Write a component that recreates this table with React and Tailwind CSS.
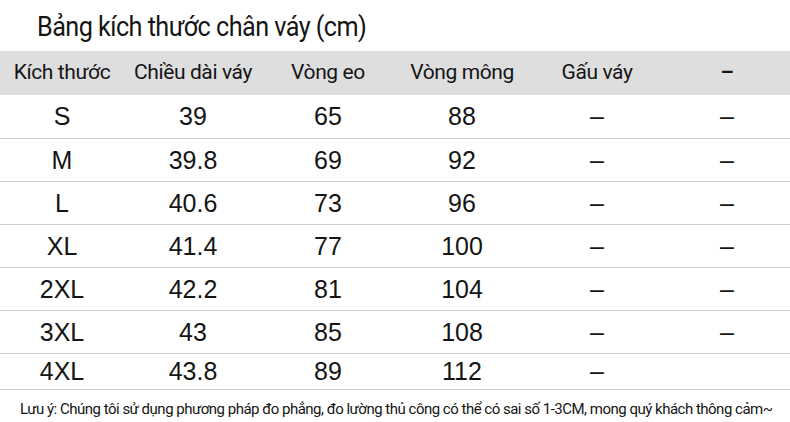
import React from "react";

const rows = [
  ["S", "39", "65", "88", "–", "–"],
  ["M", "39.8", "69", "92", "–", "–"],
  ["L", "40.6", "73", "96", "–", "–"],
  ["XL", "41.4", "77", "100", "–", "–"],
  ["2XL", "42.2", "81", "104", "–", "–"],
  ["3XL", "43", "85", "108", "–", "–"],
  ["4XL", "43.8", "89", "112", "–", ""],
];

const headers = ["Kích thước", "Chiều dài váy", "Vòng eo", "Vòng mông", "Gấu váy", "–"];

const cols = "grid grid-cols-[124px_138px_132px_136px_134px_126px]";
const cond = { fontFamily: "Roboto, 'Liberation Sans', sans-serif" };

export default function App() {
  return (
    <div className="w-[790px] h-[422px] bg-white text-[#151515] overflow-hidden">
      <div className="h-[51px] pl-[37px] flex items-center pt-[2px]">
        <h1 className="text-[28px] tracking-[-0.6px] leading-none origin-left scale-x-90 whitespace-nowrap" style={cond}>
          Bảng kích thước chân váy (cm)
        </h1>
      </div>
      <div className={`${cols} h-[44px] bg-[#dedede] items-center text-[21px] tracking-[-0.4px]`} style={cond}>
        {headers.map((h, i) => (
          <div key={i} className={i === 5 ? "text-center font-bold" : "text-center"}>
            {h}
          </div>
        ))}
      </div>
      <div style={{ fontFamily: "'Liberation Sans', Arial, sans-serif" }}>
        {rows.map((r, i) => (
          <div
            key={i}
            className={`${cols} items-center border-b border-[#cfcfcf] text-[25px] ${
              i === rows.length - 1 ? "h-[36px]" : i === 0 ? "h-[44px]" : "h-[43px]"
            }`}
          >
            {r.map((c, j) => (
              <div key={j} className="text-center leading-none">
                {c}
              </div>
            ))}
          </div>
        ))}
      </div>
      <div className="pl-[20px] pt-[8px] text-[15px] tracking-[-0.5px] whitespace-nowrap" style={cond}>
        Lưu ý: Chúng tôi sử dụng phương pháp đo phẳng, đo lường thủ công có thể có sai số 1-3CM, mong quý khách thông cảm~
      </div>
    </div>
  );
}
